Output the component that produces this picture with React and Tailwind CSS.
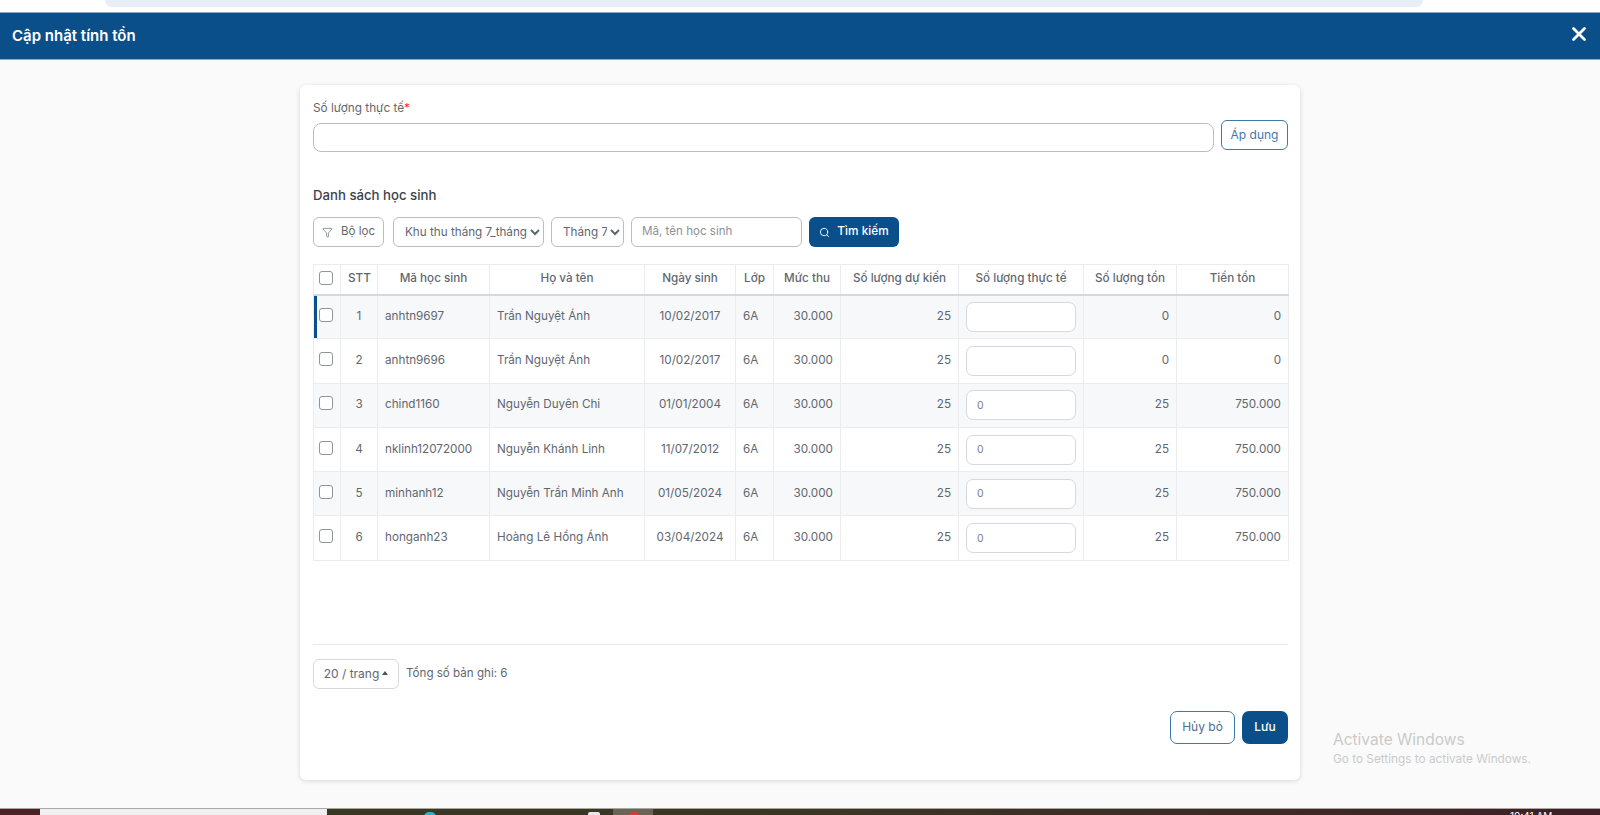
import { Filter, Search, X } from 'lucide-react'

const ROWS = [
  { stt: 1, code: 'anhtn9697', name: 'Trần Nguyệt Ánh', dob: '10/02/2017', actual: '', left: '0', money: '0' },
  { stt: 2, code: 'anhtn9696', name: 'Trần Nguyệt Ánh', dob: '10/02/2017', actual: '', left: '0', money: '0' },
  { stt: 3, code: 'chind1160', name: 'Nguyễn Duyên Chi', dob: '01/01/2004', actual: '0', left: '25', money: '750.000' },
  { stt: 4, code: 'nklinh12072000', name: 'Nguyễn Khánh Linh', dob: '11/07/2012', actual: '0', left: '25', money: '750.000' },
  { stt: 5, code: 'minhanh12', name: 'Nguyễn Trần Minh Anh', dob: '01/05/2024', actual: '0', left: '25', money: '750.000' },
  { stt: 6, code: 'honganh23', name: 'Hoàng Lê Hồng Ánh', dob: '03/04/2024', actual: '0', left: '25', money: '750.000' },
]

const HEADERS = ['STT', 'Mã học sinh', 'Họ và tên', 'Ngày sinh', 'Lớp', 'Mức thu', 'Số lượng dự kiến', 'Số lượng thực tế', 'Số lượng tồn', 'Tiền tồn']
const WIDTHS = ['w-[27px]', 'w-[37px]', 'w-[112px]', 'w-[155px]', 'w-[91px]', 'w-[38px]', 'w-[67px]', 'w-[118px]', 'w-[125px]', 'w-[93px]', 'w-[112px]']

const cell = 'border border-[#ebecee] px-[7px] text-[11.7px] text-[#5f6771]'

function Checkbox({ className }) {
  return <span className={`ml-[-2px] block h-[14px] w-[14px] rounded-[3px] border border-[#8f959c] bg-white ${className}`} />
}

export default function App() {
  return (
    <div className="flex h-[815px] w-full flex-col overflow-hidden bg-white font-['Inter',sans-serif]">
      <div className="h-[12px] shrink-0 bg-white">
        <div className="ml-[105px] h-[7px] w-[1318px] rounded-b-[10px] bg-[#e9edf6]" />
      </div>

      <header className="flex h-[48px] shrink-0 items-center justify-between border-y border-y-[#8fa9c2] bg-[#0b4f8a] pl-[12px] pr-[10px]">
        <h1 className="text-[15px] font-semibold text-white">Cập nhật tính tồn</h1>
        <X className="mt-[-5px] h-[22px] w-[22px] text-white" strokeWidth={3} />
      </header>

      <main className="relative flex-1 bg-[#fafafa] pt-[25px]">
        <section className="mx-auto flex h-[695px] w-[1000px] flex-col rounded-[6px] bg-white pl-[13px] pr-[12px] pt-[14px] shadow-[0_1px_5px_rgba(0,0,0,0.14)]">
          <label className="text-[11.8px] leading-[18px] text-[#5f6771]">
            Số lượng thực tế<span className="text-red-500">*</span>
          </label>
          <div className="mt-[3px] flex items-start gap-[7px]">
            <input className="mt-[3px] h-[29px] flex-1 rounded-[8px] border border-[#b9bdc2] bg-white" />
            <button className="h-[30px] w-[67px] rounded-[6px] border border-[#3f78ad] text-[12px] text-[#3f78ad]">Áp dụng</button>
          </div>

          <h2 className="mt-[34px] text-[13.2px] font-medium leading-[18px] text-[#3a424c]">Danh sách học sinh</h2>

          <div className="mt-[13px] flex h-[30px] items-stretch">
            <button className="flex w-[71px] items-center justify-center gap-[8px] rounded-[6px] border border-[#b9bdc2] text-[11.5px] text-[#5f6771]">
              <Filter className="h-[11px] w-[11px]" strokeWidth={1.5} />
              Bộ lọc
            </button>
            <select className="ml-[9px] w-[151px] rounded-[6px] border border-[#b9bdc2] bg-white pl-[7px] text-[11.7px] text-[#5f6771]">
              <option>Khu thu tháng 7_tháng 7</option>
            </select>
            <select className="ml-[7px] w-[73px] rounded-[6px] border border-[#b9bdc2] bg-white pl-[7px] text-[11.7px] text-[#5f6771]">
              <option>Tháng 7</option>
            </select>
            <input
              placeholder="Mã, tên học sinh"
              className="ml-[7px] w-[171px] rounded-[6px] border border-[#b9bdc2] bg-white px-[10px] text-[11.6px] placeholder:text-[#8b929a]"
            />
            <button className="ml-[7px] flex w-[90px] items-center justify-center gap-[7px] rounded-[6px] bg-[#0b4f8a] text-[11.8px] font-medium text-white">
              <Search className="h-[11px] w-[11px]" strokeWidth={2} />
              Tìm kiếm
            </button>
          </div>

          <table className="mt-[17px] w-[975px] table-fixed border-collapse">
            <colgroup>
              {WIDTHS.map((w, i) => (
                <col key={i} className={w} />
              ))}
            </colgroup>
            <thead>
              <tr className="h-[30px] border-b-2 border-b-[#d5d8dc]">
                <th className={cell}>
                  <Checkbox className="mt-[-2px]" />
                </th>
                {HEADERS.map((h) => (
                  <th key={h} className={`${cell} px-0 font-medium`}>
                    {h}
                  </th>
                ))}
              </tr>
            </thead>
            <tbody>
              {ROWS.map((row, i) => (
                <tr key={row.stt} className={`h-[44.3px] ${i % 2 === 0 ? 'bg-[#f7f8f9]' : 'bg-white'}`}>
                  <td className={`${cell} ${i === 0 ? 'shadow-[inset_3px_0_0_#0b4f8a]' : ''}`}>
                    <Checkbox className="mt-[-4px]" />
                  </td>
                  <td className={`${cell} text-center`}>{row.stt}</td>
                  <td className={cell}>{row.code}</td>
                  <td className={cell}>{row.name}</td>
                  <td className={`${cell} text-center`}>{row.dob}</td>
                  <td className={cell}>6A</td>
                  <td className={`${cell} text-right`}>30.000</td>
                  <td className={`${cell} text-right`}>25</td>
                  <td className={cell}>
                    <input
                      defaultValue={row.actual}
                      className="block h-[30px] w-full rounded-[7px] border border-[#d5d8dc] bg-white px-[10px] text-[10.5px] text-[#7a818a]"
                    />
                  </td>
                  <td className={`${cell} text-right`}>{row.left}</td>
                  <td className={`${cell} text-right`}>{row.money}</td>
                </tr>
              ))}
            </tbody>
          </table>

          <div className="mt-[83px] border-t border-t-[#e6e8eb] pt-[14px]">
            <div className="flex items-center gap-[7px]">
              <button className="flex h-[30px] w-[86px] items-center justify-center gap-[3px] rounded-[6px] border border-[#d5d8dc] text-[12px] text-[#5f6771]">
                20 / trang
                <span className="mt-[-1px] border-x-[3px] border-b-[4px] border-x-transparent border-b-[#4b535c]" />
              </button>
              <span className="text-[11.6px] text-[#5f6771]">Tổng số bản ghi: 6</span>
            </div>
          </div>

          <div className="mt-[22px] flex justify-end gap-[7px]">
            <button className="h-[33px] w-[65px] rounded-[7px] border border-[#3f78ad] text-[12px] text-[#4a6f96]">Hủy bỏ</button>
            <button className="h-[33px] w-[46px] rounded-[7px] bg-[#0b4f8a] text-[12px] font-medium text-white">Lưu</button>
          </div>
        </section>

        <div className="absolute left-[1333px] top-[670px] text-[#cacaca]">
          <p className="text-[15.5px] leading-[20px]">Activate Windows</p>
          <p className="mt-[1px] text-[11.8px] leading-[16px]">Go to Settings to activate Windows.</p>
        </div>
      </main>

      <footer className="relative flex h-[7px] shrink-0 overflow-hidden border-t border-t-[#a8a8a0] bg-gradient-to-r from-[#393a26] via-[#3a3624] to-[#3f1f28]">
        <div className="w-[40px] bg-[#4b2026]" />
        <div className="w-[287px] bg-[#f0f0f0]" />
        <div className="ml-[286px] w-[40px] bg-[#686456]" />
        <span className="absolute left-[424px] top-[3px] h-[10px] w-[12px] rounded-full bg-[#22b8c9]" />
        <span className="absolute left-[588px] top-[3px] h-[10px] w-[12px] rounded-[2px] bg-[#e8e8e8]" />
        <span className="absolute left-[628px] top-[3px] h-[10px] w-[12px] rounded-full bg-[#d9392f]" />
        <span className="absolute left-[1510px] top-[1px] text-[10px] leading-[12px] text-white">10:41 AM</span>
      </footer>
    </div>
  )
}
